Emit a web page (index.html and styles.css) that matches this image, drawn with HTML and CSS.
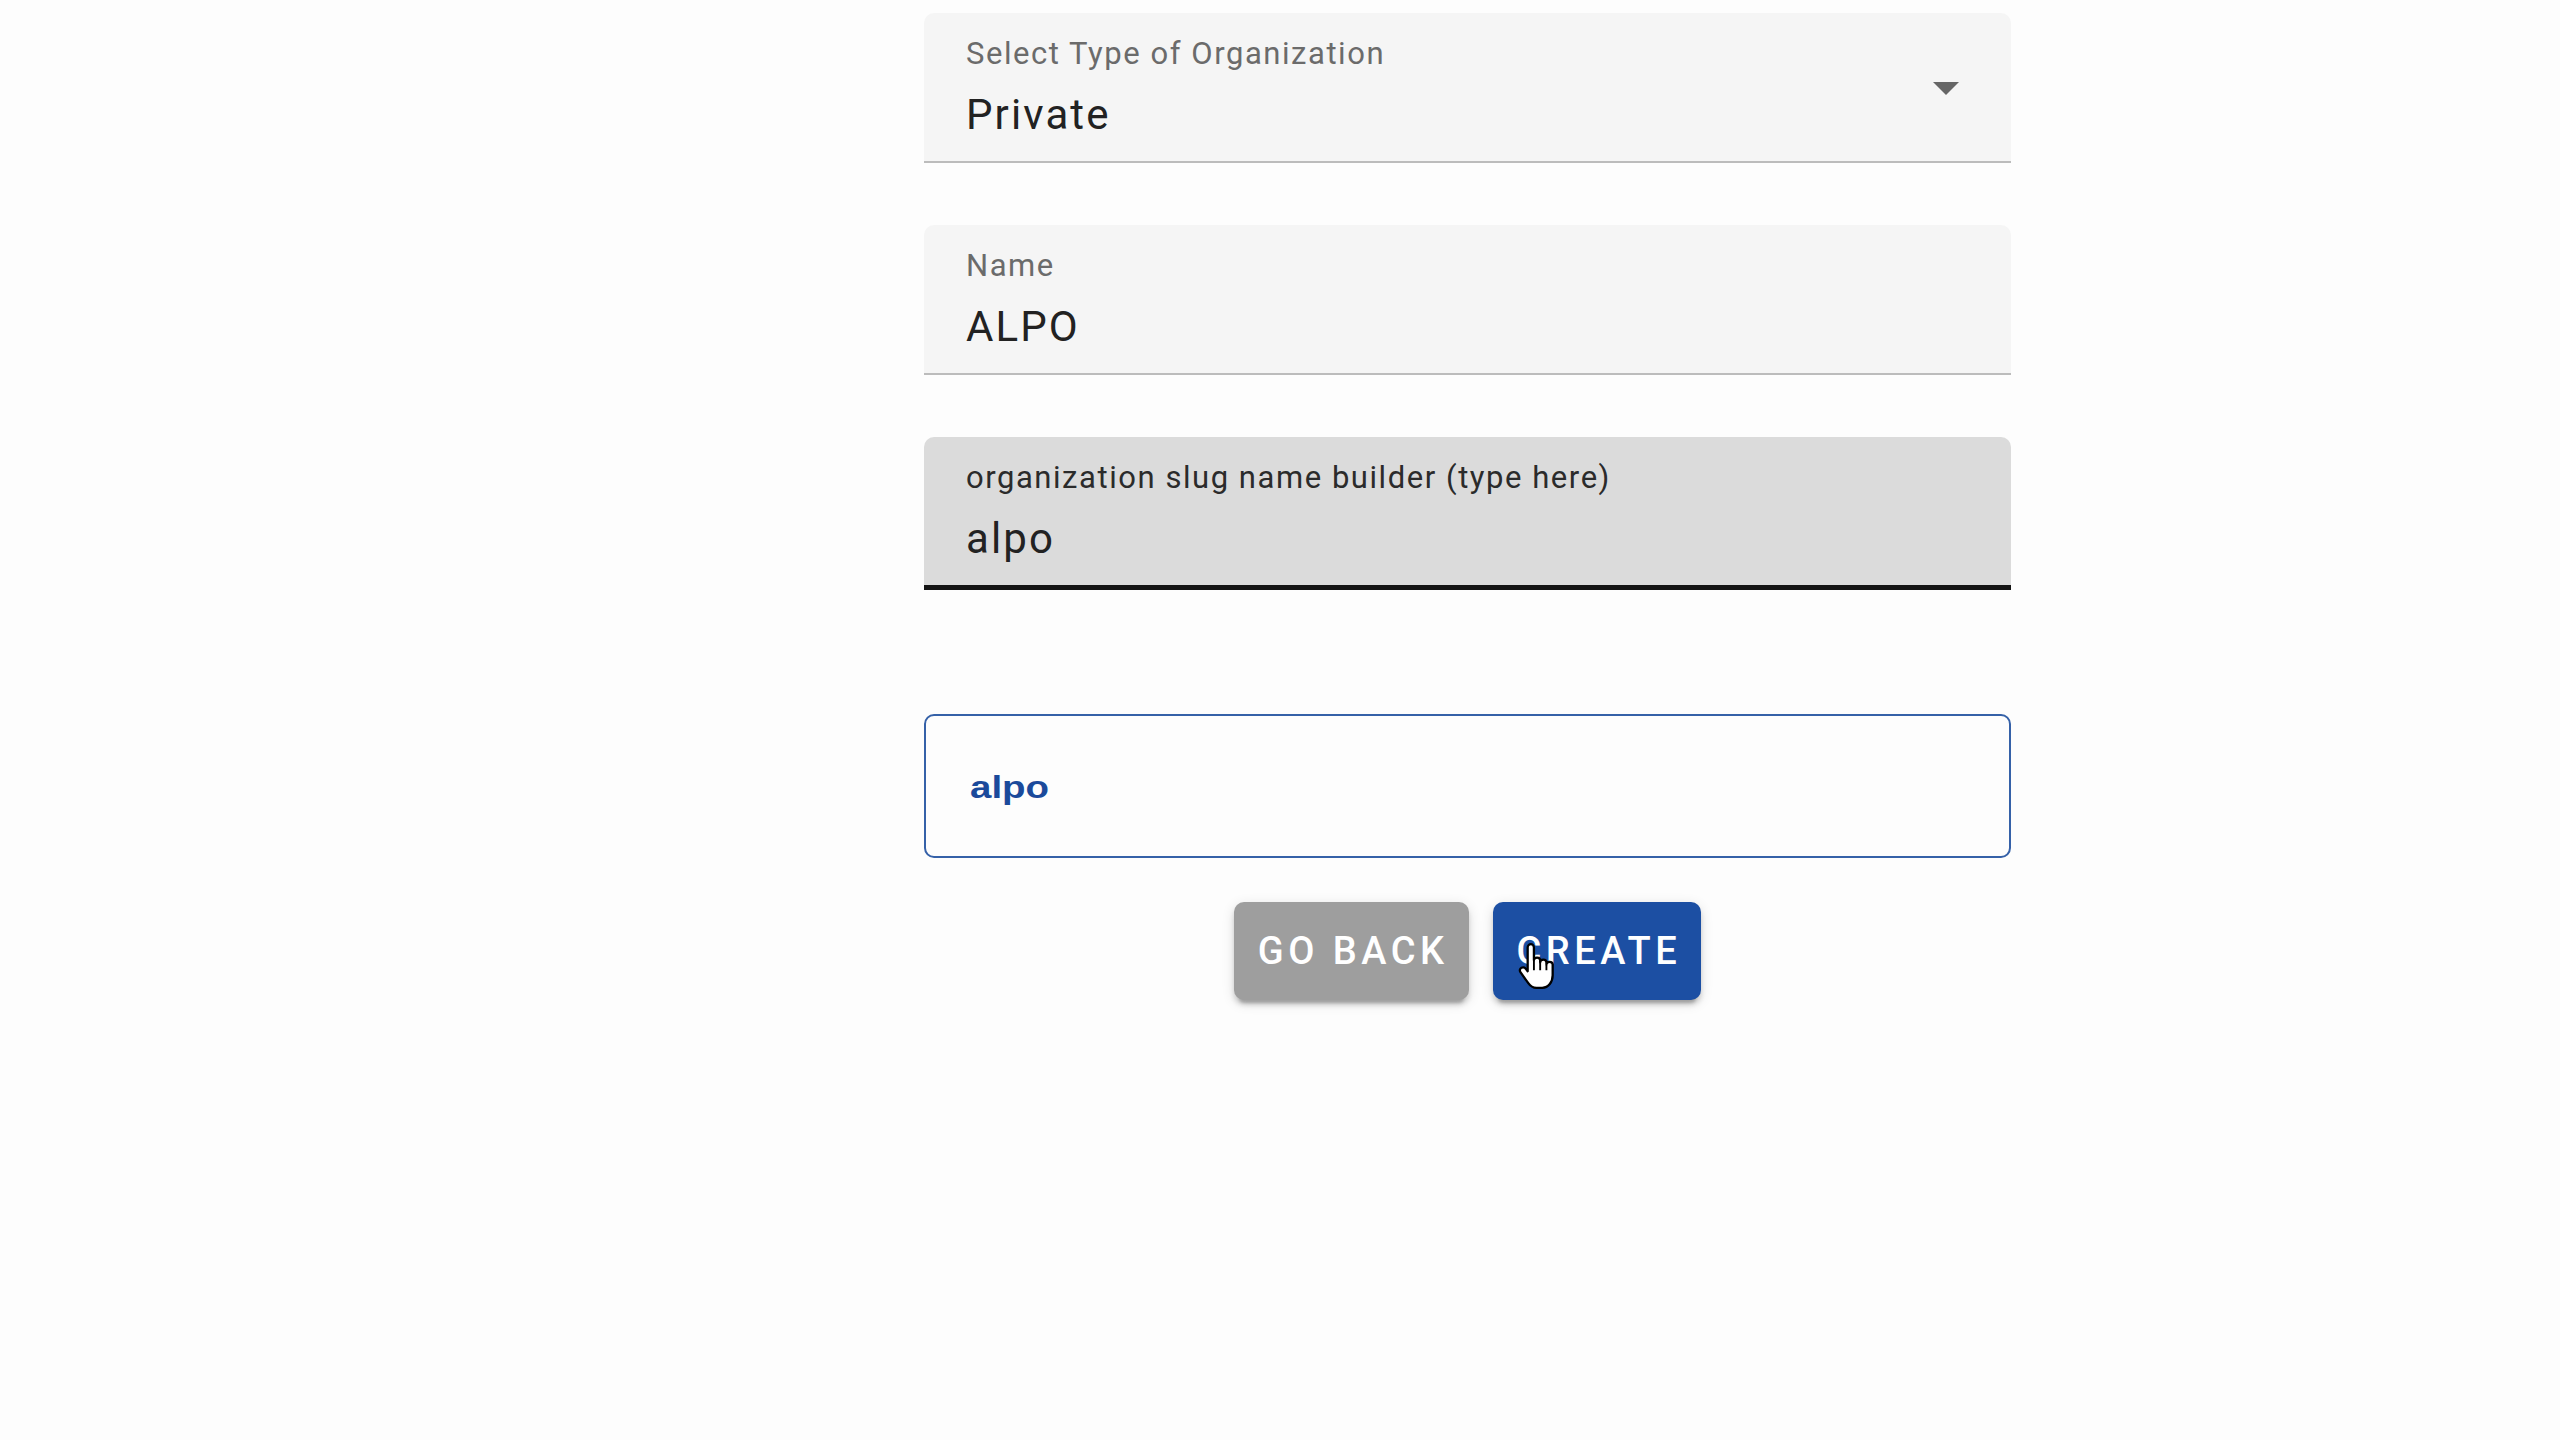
FILE: index.html
```html
<!DOCTYPE html>
<html lang="en">
<head>
<meta charset="utf-8">
<title>Create Organization</title>
<link rel="stylesheet" href="styles.css">
</head>
<body>
<main class="page">
  <form class="form">
    <div class="field">
      <div class="field-label">Select Type of Organization</div>
      <div class="field-value">Private</div>
      <span class="select-arrow"></span>
    </div>
    <div class="field">
      <div class="field-label">Name</div>
      <div class="field-value">ALPO</div>
    </div>
    <div class="field field-focused">
      <div class="field-label">organization slug name builder (type here)</div>
      <div class="field-value">alpo</div>
    </div>
    <div class="slug-output"><span class="slug-text">alpo</span></div>
    <div class="actions">
      <button type="button" class="btn btn-back">GO BACK</button>
      <button type="button" class="btn btn-create">CREATE
        <svg class="cursor" viewBox="0 0 20 24" width="42" height="50" aria-hidden="true">
          <path d="M6 14 L6 2.6 C6 1.6 6.8 1 7.5 1 C8.2 1 9 1.6 9 2.6 L9 8.8 C9 8 9.7 7.5 10.5 7.5 C11.3 7.5 12 8 12 8.8 L12 9.8 C12 9 12.7 8.5 13.5 8.5 C14.3 8.5 15 9 15 9.8 L15 10.8 C15 10 15.7 9.5 16.5 9.5 C17.3 9.5 18 10 18 10.8 L18 16 C18 19.2 16 22 13 22 L10.2 22 C8.4 22 7.2 21 6.2 19.6 L2.6 14.6 C2 13.8 2.2 12.8 3 12.4 C3.8 12 4.7 12.3 5.2 13 Z" fill="#fff" stroke="#000" stroke-width="1.1" stroke-linejoin="round"/>
          <path d="M9 9 V13.5 M12 10 V13.5 M15 11 V13.5" stroke="#000" stroke-width="0.9" fill="none"/>
        </svg>
      </button>
    </div>
  </form>
</main>
</body>
</html>
```
FILE: styles.css
```css
html, body {
  margin: 0;
  padding: 0;
  background: #fdfdfd;
  font-family: Roboto, "Liberation Sans", sans-serif;
}

.page {
  min-height: 1440px;
  box-sizing: border-box;
  padding: 13px 0 0 924px;
}

.form {
  width: 1087px;
  display: flex;
  flex-direction: column;
}

.field {
  position: relative;
  box-sizing: border-box;
  height: 150px;
  padding: 23px 42px 0 42px;
  background: #f5f5f5;
  border-radius: 10px 10px 0 0;
  border-bottom: 2px solid #bcbcbc;
  margin-bottom: 62px;
}

.field-focused {
  height: 153px;
  background: #dbdbdb;
  border-bottom: 5px solid #141414;
  margin-bottom: 124px;
}

.field-label {
  font-size: 31px;
  line-height: 36px;
  color: #6b6b6b;
  letter-spacing: 0.05em;
  white-space: nowrap;
}

.field-focused .field-label {
  color: #2b2b2b;
}

.field-value {
  margin-top: 18px;
  font-size: 42px;
  line-height: 50px;
  color: #222;
  letter-spacing: 0.05em;
}

.select-arrow {
  position: absolute;
  right: 52px;
  top: 69px;
  width: 0;
  height: 0;
  border-left: 13px solid transparent;
  border-right: 13px solid transparent;
  border-top: 13px solid #666;
}

.slug-output {
  box-sizing: border-box;
  height: 144px;
  border: 2px solid #3561a8;
  border-radius: 10px;
  background: #fdfdfd;
  display: flex;
  align-items: center;
  padding: 4px 0 0 44px;
  margin-bottom: 44px;
}

.slug-text {
  display: inline-block;
  font-family: "Liberation Sans", Arial, sans-serif;
  font-weight: 700;
  font-size: 31px;
  color: #1b4a9b;
  transform: scaleX(1.24);
  transform-origin: left center;
}

.actions {
  display: flex;
  justify-content: center;
  gap: 24px;
}

.btn {
  position: relative;
  height: 98px;
  padding: 0 20px 0 24px;
  border: none;
  border-radius: 10px;
  font-family: Roboto, "Liberation Sans", sans-serif;
  font-weight: 500;
  font-size: 38px;
  letter-spacing: 4.5px;
  color: #fff;
  box-shadow: 0 8px 3px -5px rgba(0,0,0,0.2), 0 5px 5px 0 rgba(0,0,0,0.14), 0 3px 13px 0 rgba(0,0,0,0.12);
}

.btn-back {
  background: #9e9e9e;
}

.btn-create {
  background: #1c4fa3;
}

.cursor {
  position: absolute;
  left: 22px;
  top: 40px;
}
```
